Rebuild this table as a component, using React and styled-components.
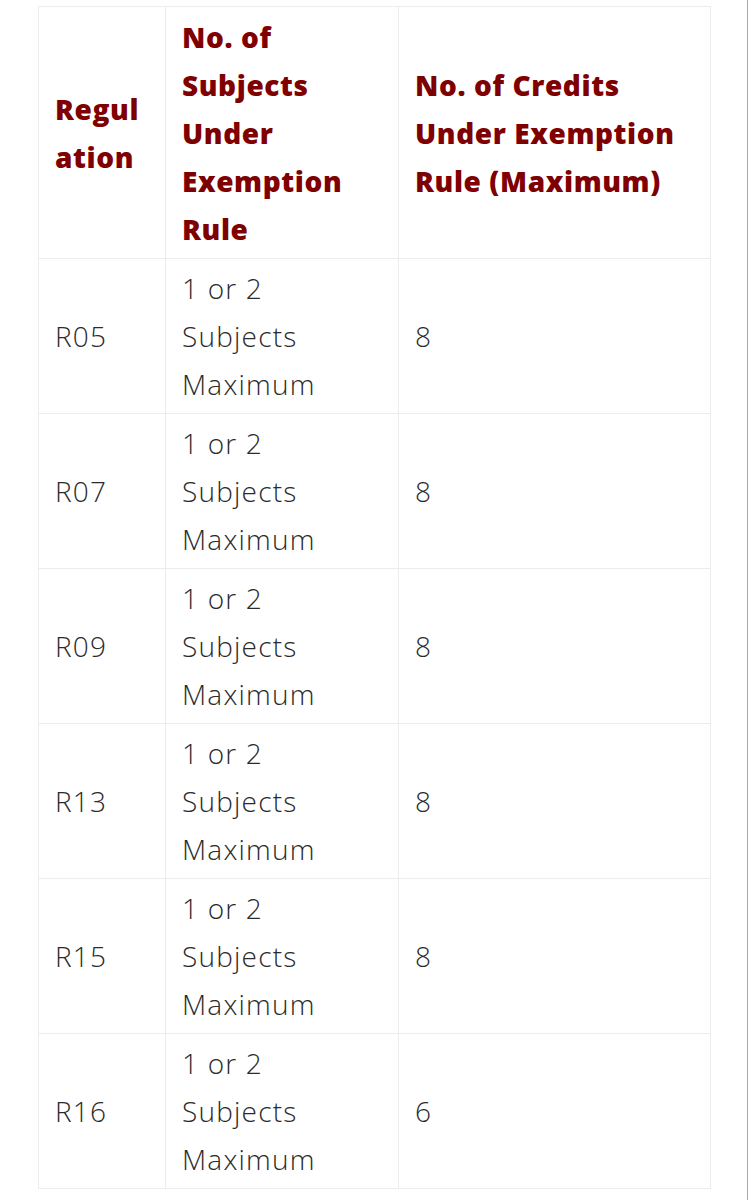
import styled, { createGlobalStyle } from "styled-components";

const GlobalStyle = createGlobalStyle`
  body {
    margin: 0;
    background: #ffffff;
  }
`;

const Page = styled.div`
  box-sizing: border-box;
  width: 748px;
  min-height: 100vh;
  padding: 6px 0 0 38px;
  border-right: 1px solid #a8a8a8;
  font-family: "Open Sans", "Noto Sans", sans-serif;
`;

const Table = styled.table`
  border-collapse: collapse;
  table-layout: fixed;
  width: 672px;
`;

const Cell = styled.td`
  border: 1px solid #ececec;
  padding: 5px 16px;
  vertical-align: middle;
  font-size: 28px;
  line-height: 48px;
  color: #2b2b2b;
  font-weight: 300;
  letter-spacing: 1.2px;
`;

const HeadCell = styled(Cell).attrs({ as: "th" })`
  padding: 6px 16px 5px;
  text-align: left;
  color: #7f0000;
  font-weight: 800;
  letter-spacing: 0.6px;
`;

const Line = styled.span`
  display: block;
  white-space: nowrap;
`;

const rows = [
  { reg: "R05", credits: "8" },
  { reg: "R07", credits: "8" },
  { reg: "R09", credits: "8" },
  { reg: "R13", credits: "8" },
  { reg: "R15", credits: "8" },
  { reg: "R16", credits: "6" },
];

const Lines = ({ items }) => items.map((t) => <Line key={t}>{t}</Line>);

export default function App() {
  return (
    <Page>
      <GlobalStyle />
      <Table>
        <colgroup>
          <col style={{ width: 127 }} />
          <col style={{ width: 233 }} />
          <col style={{ width: 312 }} />
        </colgroup>
        <thead>
          <tr>
            <HeadCell>
              <Lines items={["Regul", "ation"]} />
            </HeadCell>
            <HeadCell>
              <Lines items={["No. of", "Subjects", "Under", "Exemption", "Rule"]} />
            </HeadCell>
            <HeadCell>
              <Lines items={["No. of Credits", "Under Exemption", "Rule (Maximum)"]} />
            </HeadCell>
          </tr>
        </thead>
        <tbody>
          {rows.map((r) => (
            <tr key={r.reg}>
              <Cell>{r.reg}</Cell>
              <Cell>
                <Lines items={["1 or 2", "Subjects", "Maximum"]} />
              </Cell>
              <Cell>{r.credits}</Cell>
            </tr>
          ))}
        </tbody>
      </Table>
    </Page>
  );
}
